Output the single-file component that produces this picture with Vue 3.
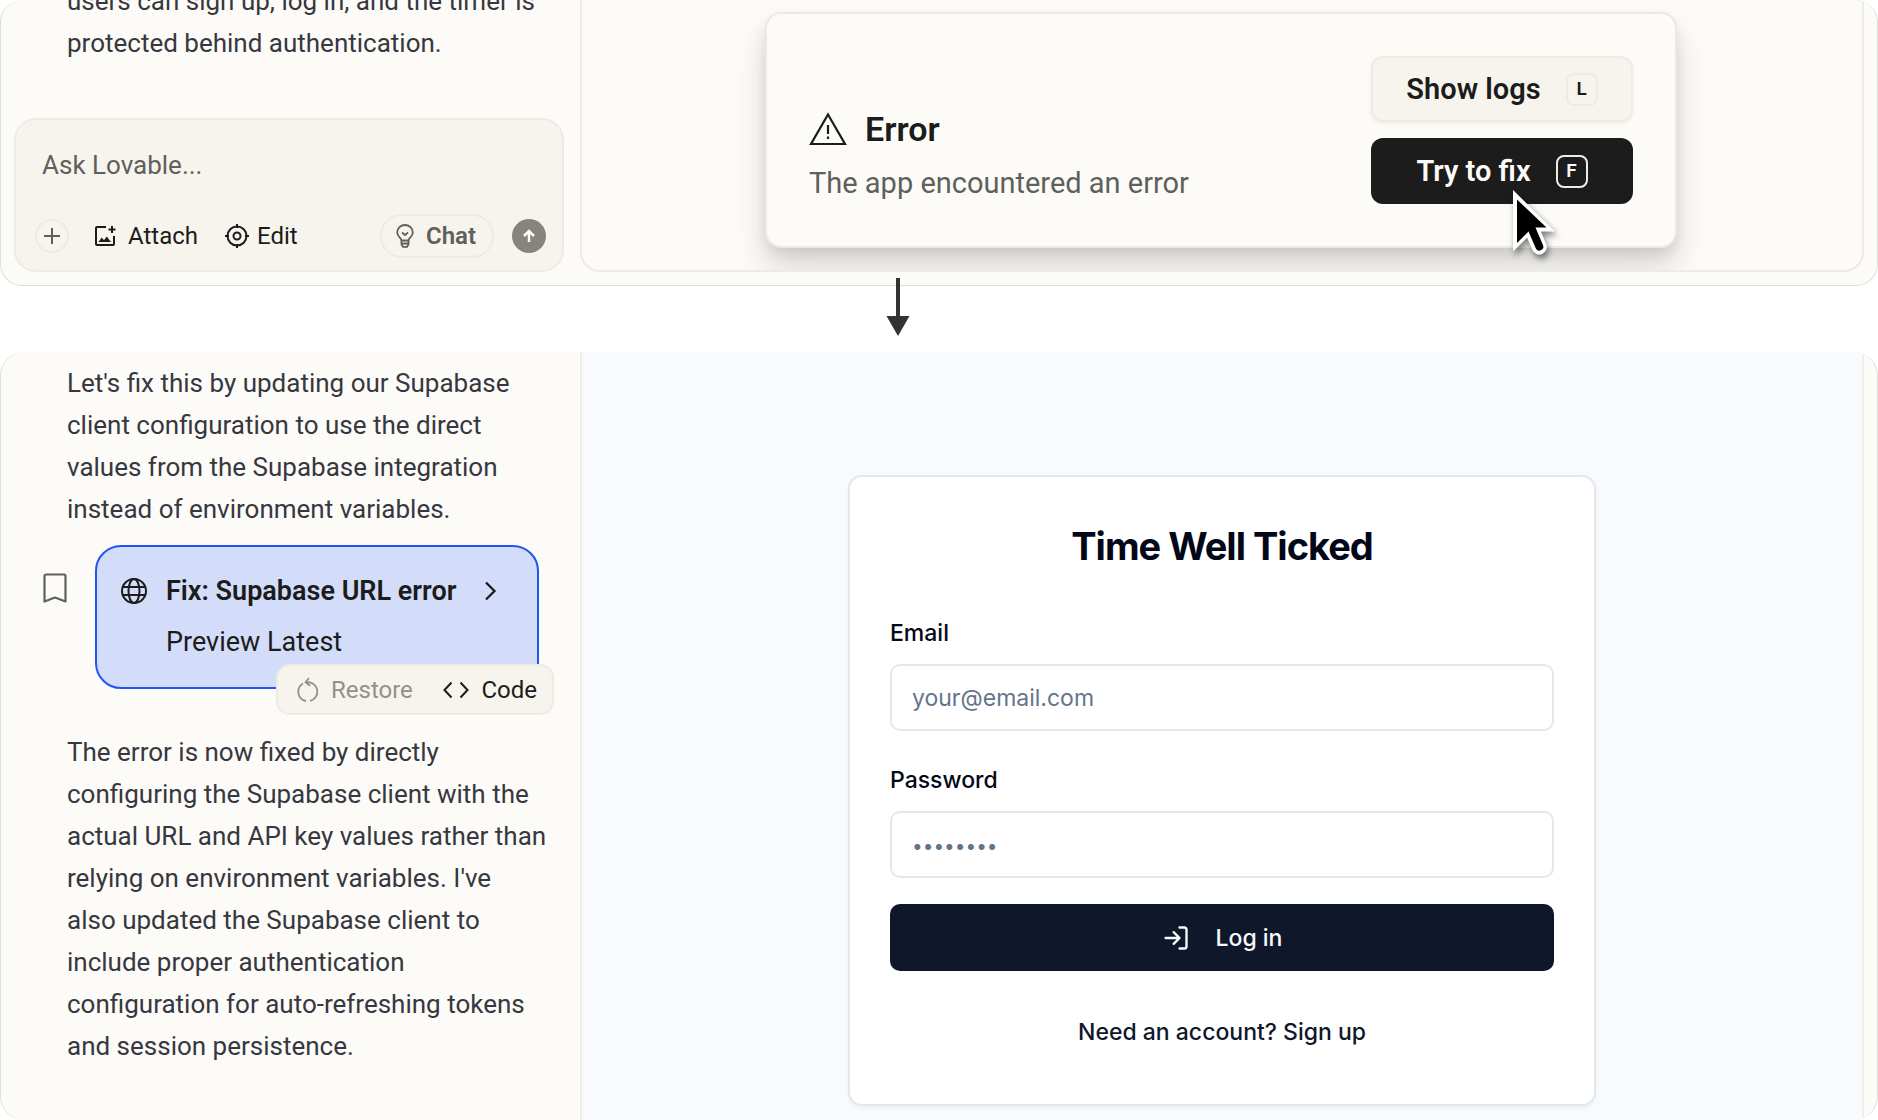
<script setup>
import { ref } from 'vue'

const prompt = ref('')
const email = ref('')
const password = ref('')

const earlierMessage = `users can sign up, log in, and the timer is
protected behind authentication.`

const planMessage = `Let's fix this by updating our Supabase
client configuration to use the direct
values from the Supabase integration
instead of environment variables.`

const resultMessage = `The error is now fixed by directly
configuring the Supabase client with the
actual URL and API key values rather than
relying on environment variables. I've
also updated the Supabase client to
include proper authentication
configuration for auto-refreshing tokens
and session persistence.`
</script>

<template>
  <main class="page">
    <section class="panel panel-before">
      <div class="chat chat-before">
        <p class="message">{{ earlierMessage }}</p>
        <form class="composer" @submit.prevent>
          <input v-model="prompt" class="composer-input" type="text" aria-label="Message" placeholder="Ask Lovable..." />
          <div class="composer-bar">
            <button class="round add" type="button" aria-label="Add">
              <svg width="16" height="16" viewBox="0 0 16 16" fill="none" stroke="currentColor" stroke-width="2">
                <path d="M8 0v16M0 8h16" />
              </svg>
            </button>
            <button class="tool attach" type="button">
              <svg width="22" height="22" viewBox="0 0 22 22" fill="none" stroke="currentColor" stroke-width="2">
                <path d="M12 2H3a1 1 0 0 0-1 1v16a1 1 0 0 0 1 1h16a1 1 0 0 0 1-1v-8" />
                <path d="M18 1v7M14.500 4.500h7" />
                <path d="M4.500 17l3.200-4.500 2.300 2.800 2.700-3.800 4.300 5.500z" fill="currentColor" stroke="none" />
              </svg>
              Attach
            </button>
            <button class="tool edit" type="button">
              <svg width="24" height="24" viewBox="0 0 24 24" fill="none" stroke="currentColor" stroke-width="2">
                <circle cx="12" cy="12" r="9.500" />
                <circle cx="12" cy="12" r="3.500" />
                <path d="M12 0v4M12 20v4M0 12h4M20 12h4" />
              </svg>
              Edit
            </button>
            <span class="spacer"></span>
            <button class="chat-mode" type="button">
              <svg width="18" height="24" viewBox="0 0 18 24" fill="none" stroke="currentColor" stroke-width="1.800">
                <path d="M5.500 16.500C5.500 14 1.200 13 1.200 8.500a7.800 7.500 0 0 1 15.600 0c0 4.500-4.300 5.500-4.300 8z" />
                <path d="M6 8.500l3 2.500 3-2.500M5.500 19.500h7M5.500 16.500v4L7 22.800h4l1.500-2.300v-4" />
              </svg>
              Chat
            </button>
            <button class="round send" type="submit" aria-label="Send">
              <svg width="14" height="14" viewBox="0 0 14 14" fill="none" stroke="currentColor" stroke-width="2.500">
                <path d="M7 13V2M2 7l5-5 5 5" />
              </svg>
            </button>
          </div>
        </form>
      </div>

      <div class="preview preview-before">
        <div class="error-card" role="alert">
          <div class="error-text">
            <h2 class="error-title">
              <svg width="38" height="34" viewBox="0 0 38 34" fill="none" stroke="currentColor" stroke-width="2.200">
                <path d="M19 2.500L36 32H2z" />
                <path d="M19 13v9" />
                <path d="M19 24.500v2.500" />
              </svg>
              Error
            </h2>
            <p class="error-description">The app encountered an error</p>
          </div>
          <div class="error-actions">
            <button class="action action-light" type="button">Show logs <kbd>L</kbd></button>
            <button class="action action-dark" type="button">
              Try to fix <kbd>F</kbd>
              <svg class="cursor" width="46" height="68" viewBox="0 0 46 68">
                <path d="M0 0L42 41.500H29L19 43L0 61.500z" fill="#fff" />
                <path d="M19 40l7.300 17" stroke="#fff" stroke-width="15" stroke-linecap="round" />
                <path d="M4 9.500L33.500 37.500H21L15.500 41.500L4 53z" fill="#000" />
                <path d="M17.500 36l8.800 20.500" stroke="#000" stroke-width="8" stroke-linecap="round" />
              </svg>
            </button>
          </div>
        </div>
      </div>
    </section>

    <div class="connector">
      <svg class="down-arrow" width="24" height="58" viewBox="0 0 24 58" fill="#333">
        <path d="M10 0h4v38h9.500L12 58 .5 38H10z" />
      </svg>
    </div>

    <section class="panel panel-after">
      <div class="chat chat-after">
        <p class="message">{{ planMessage }}</p>
        <div class="version-row">
          <button class="bookmark" type="button" aria-label="Bookmark">
            <svg width="24" height="30" viewBox="0 0 24 30" fill="none" stroke="currentColor" stroke-width="2.200" stroke-linejoin="round">
              <path d="M3 1.500h18a1.500 1.500 0 0 1 1.500 1.500v25.500L12 24.500 1.500 28.500V3A1.500 1.500 0 0 1 3 1.500z" />
            </svg>
          </button>
          <div class="version">
            <button class="version-title" type="button">
              <svg width="28" height="28" viewBox="0 0 28 28" fill="none" stroke="currentColor" stroke-width="2">
                <circle cx="14" cy="14" r="12" />
                <ellipse cx="14" cy="14" rx="5.500" ry="12" />
                <path d="M3 10h22M3 18h22" />
              </svg>
              <span class="version-name">Fix: Supabase URL error</span>
              <svg width="14" height="20" viewBox="0 0 14 20" fill="none" stroke="currentColor" stroke-width="2.300">
                <path d="M3 1.500l8.500 8.500L3 18.500" />
              </svg>
            </button>
            <p class="version-note">Preview Latest</p>
            <div class="version-menu">
              <button class="menu-item muted" type="button">
                <svg width="22" height="26" viewBox="0 0 22 26" fill="none" stroke="currentColor" stroke-width="1.800">
                  <path d="M9 5.500a9.300 9.300 0 0 1 4 18.300" />
                  <path d="M6 6.500A9.500 9.500 0 0 0 9 24" />
                  <path d="M12 1L8.500 5.300l4.700 3.400" />
                </svg>
                Restore
              </button>
              <button class="menu-item" type="button">
                <svg width="26" height="18" viewBox="0 0 26 18" fill="none" stroke="currentColor" stroke-width="2">
                  <path d="M8.500 1.500L1.500 9l7 7.500M17.500 1.500l7 7.500-7 7.500" />
                </svg>
                Code
              </button>
            </div>
          </div>
        </div>
        <p class="message">{{ resultMessage }}</p>
      </div>

      <div class="preview preview-after">
        <form class="login" @submit.prevent>
          <h1 class="login-title">Time Well Ticked</h1>
          <div class="field">
            <label for="email">Email</label>
            <input id="email" v-model="email" type="email" placeholder="your@email.com" />
          </div>
          <div class="field">
            <label for="password">Password</label>
            <input id="password" v-model="password" type="password" placeholder="••••••••" />
          </div>
          <button class="login-button" type="submit">
            <svg width="28" height="28" viewBox="0 0 24 24" fill="none" stroke="currentColor" stroke-width="2" stroke-linecap="round" stroke-linejoin="round">
              <path d="M15 3h4a2 2 0 0 1 2 2v14a2 2 0 0 1-2 2h-4M10 17l5-5-5-5M15 12H3" />
            </svg>
            Log in
          </button>
          <a class="signup" href="#">Need an account? Sign up</a>
        </form>
      </div>
    </section>
  </main>
</template>

<style>
body {
  background: #fff;
}
</style>

<style scoped>
.page,
.page * {
  box-sizing: border-box;
}

.page {
  display: flex;
  flex-direction: column;
  min-height: 100vh;
  overflow: hidden;
  font-family: Roboto, "Liberation Sans", sans-serif;
  font-size: 26px;
  line-height: 42px;
  color: #1c1c1c;
}

h1,
h2,
p {
  margin: 0;
}

button,
input,
kbd {
  font: inherit;
  color: inherit;
}

button {
  padding: 0;
  border: 0;
  background: none;
  white-space: nowrap;
}

svg {
  display: block;
  flex: none;
}

.panel {
  display: grid;
  grid-template-columns: 579px minmax(0, 1fr);
  overflow: hidden;
  background: #fcfbf8;
  border: 0 solid #dededb;
}

.panel-before {
  grid-template-rows: minmax(0, 1fr);
  height: 286px;
  border-width: 0 1px 1px;
  border-radius: 22px;
}

.panel-after {
  flex: 1;
  border-width: 0 1px;
  border-radius: 24px;
}

.chat {
  display: flex;
  flex-direction: column;
}

.chat-before {
  justify-content: flex-end;
  gap: 54px;
  padding: 0 16px 13px 13px;
}

.message {
  white-space: pre;
  color: #373740;
}

.chat-before .message {
  padding-left: 53px;
}

.composer {
  display: flex;
  flex-direction: column;
  gap: 28px;
  height: 155px;
  padding: 24px 16px 12px;
  background: #f7f4ed;
  border: 2px solid #ecebe6;
  border-radius: 22px;
}

.composer-input {
  width: 100%;
  height: 42px;
  padding: 0 10px;
  border: 0;
  outline: 0;
  background: none;
}

.composer-input::placeholder {
  color: #5f5f5b;
  opacity: 1;
}

.composer-bar {
  display: flex;
  align-items: center;
  height: 44px;
  padding-left: 3px;
  font-size: 24px;
}

.round {
  display: grid;
  place-items: center;
  width: 34px;
  height: 34px;
  border-radius: 50%;
}

.add {
  border: 2px solid #ecebe6;
  color: #5f5f5b;
}

.send {
  margin-left: 18px;
  background: #85847f;
  color: #fcfbf8;
}

.tool {
  display: flex;
  align-items: center;
}

.attach {
  gap: 12px;
  margin-left: 25px;
}

.edit {
  gap: 8px;
  margin-left: 27px;
}

.spacer {
  flex: 1;
}

.chat-mode {
  display: flex;
  align-items: center;
  gap: 12px;
  height: 44px;
  padding: 0 16px 0 14px;
  border: 2px solid #ecebe6;
  border-radius: 22px;
  font-weight: 600;
  color: #5f5f5b;
}

.preview-before {
  display: flex;
  justify-content: center;
  margin: 0 13px 13px 0;
  padding: 12px 42px 0 40px;
  overflow: hidden;
  border: 2px solid #ecebe6;
  border-top: 0;
  border-radius: 0 0 20px 20px;
}

.error-card {
  display: flex;
  align-items: flex-end;
  justify-content: space-between;
  width: 912px;
  height: 236px;
  padding: 42px;
  background: #fcfbf8;
  border: 2px solid #ebe9e4;
  border-radius: 16px;
  box-shadow: 0 20px 32px rgba(0, 0, 0, 0.14), 0 6px 12px rgba(0, 0, 0, 0.08);
}

.error-text {
  display: flex;
  flex-direction: column;
  gap: 12px;
}

.error-title {
  display: flex;
  align-items: center;
  gap: 18px;
  font-size: 34px;
  font-weight: 600;
  line-height: 42px;
}

.error-description {
  font-size: 29px;
  line-height: 42px;
  color: #5f5f5b;
}

.error-actions {
  display: flex;
  flex-direction: column;
  gap: 16px;
  width: 262px;
}

.action {
  position: relative;
  display: flex;
  align-items: center;
  justify-content: center;
  gap: 25px;
  height: 66px;
  border-radius: 12px;
  font-size: 29px;
  font-weight: 600;
}

.action kbd {
  display: grid;
  place-items: center;
  width: 32px;
  height: 33px;
  border: 2px solid #ecebe6;
  border-radius: 8px;
  font-size: 19px;
  line-height: 28px;
}

.action-light {
  background: #f7f4ed;
  border: 2px solid #ecebe6;
  box-shadow: 0 2px 4px rgba(0, 0, 0, 0.05);
}

.action-dark {
  background: #1c1c1c;
  color: #fcfbf8;
}

.cursor {
  position: absolute;
  top: 52px;
  left: 142px;
  overflow: visible;
  filter: drop-shadow(2px 4px 3px rgba(0, 0, 0, 0.5));
}

.connector {
  position: relative;
  height: 66px;
}

.down-arrow {
  position: absolute;
  top: -8px;
  left: calc(50% - 53px);
}

.chat-after {
  padding: 10px 0 24px;
}

.chat-after .message {
  padding-left: 66px;
}

.version-row {
  display: flex;
  align-items: flex-start;
  gap: 28px;
  padding: 15px 41px 42px 42px;
}

.bookmark {
  padding-top: 28px;
  color: #5f5f5b;
}

.version {
  position: relative;
  flex: 1;
  height: 144px;
  padding: 23px 40px 0 23px;
  background: #d3ddf9;
  border: 2px solid #1f55f5;
  border-radius: 26px;
  font-size: 27px;
}

.version-title {
  display: flex;
  align-items: center;
  width: 100%;
  text-align: left;
  font-weight: 600;
}

.version-name {
  flex: 1;
  padding-left: 18px;
}

.version-note {
  padding: 9px 0 0 46px;
}

.version-menu {
  position: absolute;
  top: 117px;
  right: -17px;
  display: flex;
  align-items: center;
  justify-content: space-between;
  width: 278px;
  height: 51px;
  padding: 0 15px 0 19px;
  background: #f7f4ed;
  border: 2px solid #ecebe6;
  border-radius: 14px;
  font-size: 24px;
}

.menu-item {
  display: flex;
  align-items: center;
  gap: 12px;
}

.muted {
  color: #92918c;
}

.preview-after {
  display: flex;
  align-items: flex-start;
  justify-content: center;
  margin-right: 13px;
  padding: 123px 40px 14px;
  background: #f8fafc;
  border: 2px solid #efeee9;
  border-width: 0 2px;
}

.login {
  display: flex;
  flex-direction: column;
  width: 748px;
  padding: 41px 40px 56px;
  background: #fff;
  border: 2px solid #e2e8f0;
  border-radius: 14px;
  box-shadow: 0 2px 4px rgba(0, 0, 0, 0.05);
  font-family: Inter, "Liberation Sans", sans-serif;
  font-size: 23px;
  line-height: 32px;
  color: #020817;
}

.login-title {
  margin-bottom: 43px;
  text-align: center;
  font-size: 38px;
  font-weight: 700;
  line-height: 56px;
  letter-spacing: -1px;
}

.field {
  display: flex;
  flex-direction: column;
  gap: 15px;
  margin-bottom: 33px;
  font-weight: 500;
}

.field + .field {
  margin-bottom: 26px;
}

.field input {
  width: 100%;
  height: 67px;
  padding: 0 20px;
  background: #fff;
  border: 2px solid #e2e8f0;
  border-radius: 10px;
  font-weight: 400;
}

.field input::placeholder {
  color: #64748b;
  opacity: 1;
}

#password::placeholder {
  font-size: 19px;
}

.login-button {
  display: flex;
  align-items: center;
  justify-content: center;
  gap: 26px;
  height: 67px;
  background: #0f172a;
  border-radius: 10px;
  font-weight: 500;
  color: #f8fafc;
}

.signup {
  align-self: center;
  margin-top: 45px;
  font-weight: 500;
  color: #0f172a;
  text-decoration: none;
}
</style>
